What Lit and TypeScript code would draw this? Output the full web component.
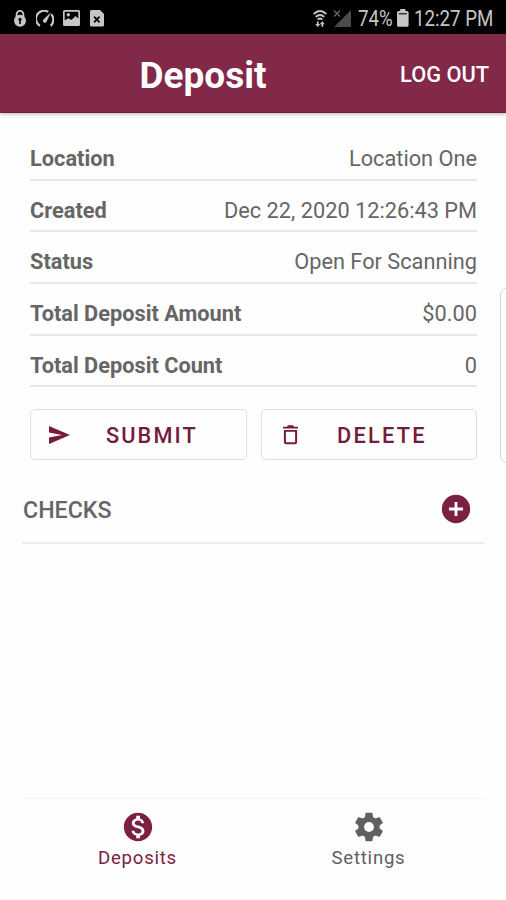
import { LitElement, html, css, svg } from "lit";
import { customElement } from "lit/decorators.js";

interface Row {
  label: string;
  value: string;
}

const ROWS: Row[] = [
  { label: "Location", value: "Location One" },
  { label: "Created", value: "Dec 22, 2020 12:26:43 PM" },
  { label: "Status", value: "Open For Scanning" },
  { label: "Total Deposit Amount", value: "$0.00" },
  { label: "Total Deposit Count", value: "0" },
];

const lockIcon = svg`<path d="M2.6 8V5.2a3.4 3.4 0 0 1 6.8 0V8" fill="none" stroke="currentColor" stroke-width="1.8"/>
  <circle cx="6" cy="11.8" r="6" fill="currentColor"/>
  <circle cx="6" cy="10.4" r="1.6" fill="#000"/><path d="M5.2 11h1.6v4H5.2z" fill="#000"/>`;
const gaugeIcon = svg`<path d="M3.900 15.800A8 8 0 0 1 12.300 1.900M15.200 4.300a8 8 0 0 1-.600 11.500" fill="none" stroke="currentColor" stroke-width="2.200"/>
  <path d="M15 2.2 10.9 11a2 2 0 1 1-3-2z" fill="currentColor"/>`;
const imageIcon = svg`<path fill="currentColor" fill-rule="evenodd" d="M1.5 0h14A1.5 1.5 0 0 1 17 1.5v13a1.5 1.5 0 0 1-1.5 1.5h-14A1.5 1.5 0 0 1 0 14.500v-13A1.500 1.500 0 0 1 1.500 0zM1.700 1.700v8.600l3.800-2 3 1.700 4-4 2.800 2.400V1.700z"/>
  <circle cx="5.300" cy="4.700" r="1.700" fill="currentColor"/>`;
const fileIcon = svg`<path fill="currentColor" d="M1.500 0H10l4 4v11a1.500 1.500 0 0 1-1.500 1.500h-11A1.500 1.500 0 0 1 0 15V1.500A1.500 1.500 0 0 1 1.500 0z"/>
  <path d="m4 6.700 5.600 5.600m0-5.600L4 12.300" stroke="#000" stroke-width="1.700"/>`;
const wifiIcon = svg`<g fill="none" stroke="currentColor" stroke-width="1.900">
  <path d="M.7 4Q7 -1.800 13.300 4M2.700 6.900Q7 3 11.300 6.900M4.700 9.600Q7 7.600 9.300 9.600"/></g>
  <path fill="currentColor" d="M4.800 17 2.300 14h1.600v-2.500h1.700V14h1.600zM9.300 11.300l2.500 3h-1.600v2.500H8.500v-2.500H6.800z"/>`;
const signalIcon = svg`<path d="M18 1v17H1z" fill="#4b4b4b"/><path d="m1 1.500 6 6m0-6-6 6" stroke="#666" stroke-width="1.400"/>`;
const batteryIcon = svg`<path fill="currentColor" d="M3.200 0h5.200v2h1.700a1.500 1.500 0 0 1 1.500 1.500v12.700a1.500 1.500 0 0 1-1.500 1.500H1.500A1.500 1.500 0 0 1 0 16.200V3.500A1.500 1.500 0 0 1 1.500 2h1.700z"/>
  <path d="M1.700 4.700h8.200" stroke="#333" stroke-width="1.500"/>`;
const sendIcon = svg`<path fill="currentColor" d="M2 21 23 12 2 3v6.500l13 2.500-13 2.500z"/>`;
const trashIcon = svg`<path fill="currentColor" fill-rule="evenodd" d="M0 1.700h4L5 .300h5l1 1.400h4v1.800H0zM.9 5h13.200v12.300a2 2 0 0 1-2 2H2.900a2 2 0 0 1-2-2zM2.900 6.800v10.500h9.200V6.800z"/>`;
const plusIcon = svg`<path fill="currentColor" d="M17 13h-4v4h-2v-4H7v-2h4V7h2v4h4m-5-9A10 10 0 0 0 2 12a10 10 0 0 0 10 10 10 10 0 0 0 10-10A10 10 0 0 0 12 2z"/>`;
const dollarIcon = svg`<path fill="currentColor" d="M12 2C6.480 2 2 6.480 2 12s4.480 10 10 10 10-4.480 10-10S17.520 2 12 2zm1.410 16.090V20h-2.670v-1.930c-1.710-.36-3.160-1.460-3.270-3.400h1.960c.1 1.050.82 1.870 2.650 1.870 1.960 0 2.400-.98 2.400-1.590 0-.83-.44-1.610-2.670-2.140-2.480-.6-4.180-1.620-4.180-3.670 0-1.720 1.390-2.840 3.110-3.210V4h2.670v1.950c1.860.45 2.790 1.860 2.850 3.390H14.300c-.05-1.110-.64-1.870-2.220-1.870-1.500 0-2.400.68-2.400 1.640 0 .84.65 1.390 2.670 1.910s4.180 1.390 4.180 3.910c-.01 1.830-1.380 2.830-3.120 3.160z"/>`;
const cogIcon = svg`<path fill="currentColor" d="M12 15.500A3.500 3.500 0 0 1 8.500 12 3.500 3.500 0 0 1 12 8.500a3.500 3.500 0 0 1 3.500 3.500 3.500 3.500 0 0 1-3.500 3.500m7.430-2.530c.04-.32.07-.64.07-.97s-.03-.66-.07-1l2.110-1.630c.19-.15.24-.42.12-.64l-2-3.460c-.12-.22-.39-.31-.61-.22l-2.490 1c-.52-.39-1.060-.73-1.690-.98l-.37-2.650A.506.506 0 0 0 14 2h-4c-.25 0-.46.180-.5.420l-.37 2.650c-.63.250-1.170.590-1.690.98l-2.490-1c-.22-.09-.49 0-.61.220l-2 3.460c-.13.220-.07.490.12.640L4.570 11c-.04.340-.07.670-.07 1s.03.650.07.970l-2.110 1.660c-.19.150-.25.420-.12.640l2 3.460c.12.220.39.300.61.220l2.490-1.010c.52.400 1.060.740 1.690.990l.37 2.650c.04.240.25.420.5.420h4c.25 0 .46-.18.500-.42l.37-2.650c.63-.26 1.170-.59 1.690-.99l2.490 1.010c.22.080.49 0 .61-.22l2-3.460c.12-.22.070-.49-.12-.64z"/>`;

const icon = (w: number, h: number, body: unknown, boxW = w, boxH = h) =>
  html`<svg width=${w} height=${h} viewBox="0 0 ${boxW} ${boxH}" aria-hidden="true">${body}</svg>`;

@customElement("app-root")
export class AppRoot extends LitElement {
  static styles = css`
    :host {
      display: flex;
      flex-direction: column;
      position: relative;
      box-sizing: border-box;
      width: 506px;
      height: 900px;
      overflow: hidden;
      background: #fefefe;
      color: #666;
      font-family: Roboto, "Liberation Sans", sans-serif;
      font-size: 21.75px;
      white-space: nowrap;
    }
    svg { display: block; flex: none; }
    .status {
      display: flex;
      align-items: center;
      flex: none;
      height: 34px;
      box-sizing: border-box;
      padding: 2px 12px 0 14px;
      background: #000;
      color: #c6c6c6;
      font-size: 21.5px;
    }
    .notices { display: flex; align-items: center; gap: 9.5px; }
    .system { display: flex; align-items: center; margin-left: auto; }
    .system svg + svg { margin-left: 6px; }
    .percent, .clock {
      display: block;
      transform: scaleX(0.87);
      transform-origin: left;
    }
    .percent { width: 34px; margin: 0 5px 0 7px; }
    .clock { width: 80px; margin-left: 5px; }
    .bar {
      display: grid;
      grid-template-columns: 139.5px 1fr auto;
      align-items: center;
      flex: none;
      height: 79px;
      box-sizing: border-box;
      padding-right: 17px;
      background: #822848;
      border-bottom: 1px solid #761b3c;
      box-shadow: 0 1px 4px rgba(0, 0, 0, 0.3);
      color: #fff;
    }
    .title {
      grid-column: 2;
      margin: 5px 0 0;
      font-size: 37px;
      font-weight: 700;
      line-height: 44px;
    }
    .logout { font-weight: 500; font-size: 21.8px; margin-top: 2px; }
    .rows { margin: 16px 29px 0 30px; flex: none; }
    .row {
      display: flex;
      align-items: center;
      justify-content: space-between;
      height: 51.7px;
      box-sizing: border-box;
      padding-top: 9px;
      border-bottom: 2px solid #e8e8e8;
    }
    .label { font-weight: 700; }
    .buttons {
      display: grid;
      grid-template-columns: 1fr 1fr;
      gap: 14px;
      margin: 22px 29px 0 30px;
      flex: none;
    }
    .button {
      display: flex;
      align-items: center;
      height: 51px;
      box-sizing: border-box;
      border: 1px solid #dfdfdf;
      border-radius: 5px;
      color: #761b3c;
      font-weight: 500;
      padding-left: 16px;
      padding-top: 1px;
    }
    .submit { letter-spacing: 2.1px; margin-left: 35px; }
    .delete { letter-spacing: 2.25px; margin-left: 39px; }
    .trash { padding-left: 21.5px; }
    .checks {
      display: flex;
      align-items: center;
      justify-content: space-between;
      flex: none;
      height: 84px;
      box-sizing: border-box;
      margin: 0 21px 0 22px;
      padding: 16px 12px 0 1px;
      border-bottom: 2px solid #ececec;
      font-weight: 500;
      font-size: 23.2px;
    }
    .heading { padding-top: 1px; }
    .add { color: #7c2042; }
    .tabs {
      display: flex;
      flex: none;
      height: 103px;
      box-sizing: border-box;
      margin: auto 22px 0;
      padding-top: 13px;
      background: linear-gradient(#f7f7f7, #fefefe 5px);
    }
    .tab {
      display: flex;
      flex-direction: column;
      align-items: center;
      flex: 1;
      font-size: 18.6px;
      letter-spacing: 0.75px;
      line-height: 24px;
      gap: 2px;
      color: #606060;
    }
    .active { color: #7c2042; }
    .edge {
      position: absolute;
      right: -8px;
      top: 288px;
      width: 14px;
      height: 175px;
      box-sizing: border-box;
      border: 1px solid #d6d6d6;
      border-radius: 7px;
    }
  `;

  render() {
    return html`
      <div class="status">
        <div class="notices">
          ${icon(12, 18, lockIcon)} ${icon(18, 17, gaugeIcon)} ${icon(17, 16, imageIcon)} ${icon(14, 17, fileIcon)}
        </div>
        <div class="system">
          ${icon(14, 17, wifiIcon)} ${icon(18, 18, signalIcon)}
          <span class="percent">74%</span>
          ${icon(12, 18, batteryIcon)}
          <span class="clock">12:27 PM</span>
        </div>
      </div>
      <header class="bar">
        <h1 class="title">Deposit</h1>
        <span class="logout">LOG OUT</span>
      </header>
      <div class="rows">
        ${ROWS.map(
          (r) => html`<div class="row">
            <span class="label">${r.label}</span>
            <span>${r.value}</span>
          </div>`
        )}
      </div>
      <div class="buttons">
        <div class="button">${icon(24, 24, sendIcon)}<span class="submit">SUBMIT</span></div>
        <div class="button trash">${icon(15, 20, trashIcon)}<span class="delete">DELETE</span></div>
      </div>
      <div class="checks">
        <span class="heading">CHECKS</span>
        <span class="add">${icon(34, 34, plusIcon, 24, 24)}</span>
      </div>
      <nav class="tabs">
        <div class="tab active">${icon(34, 34, dollarIcon, 24, 24)}<span>Deposits</span></div>
        <div class="tab">${icon(34, 34, cogIcon, 24, 24)}<span>Settings</span></div>
      </nav>
      <div class="edge"></div>
    `;
  }
}
